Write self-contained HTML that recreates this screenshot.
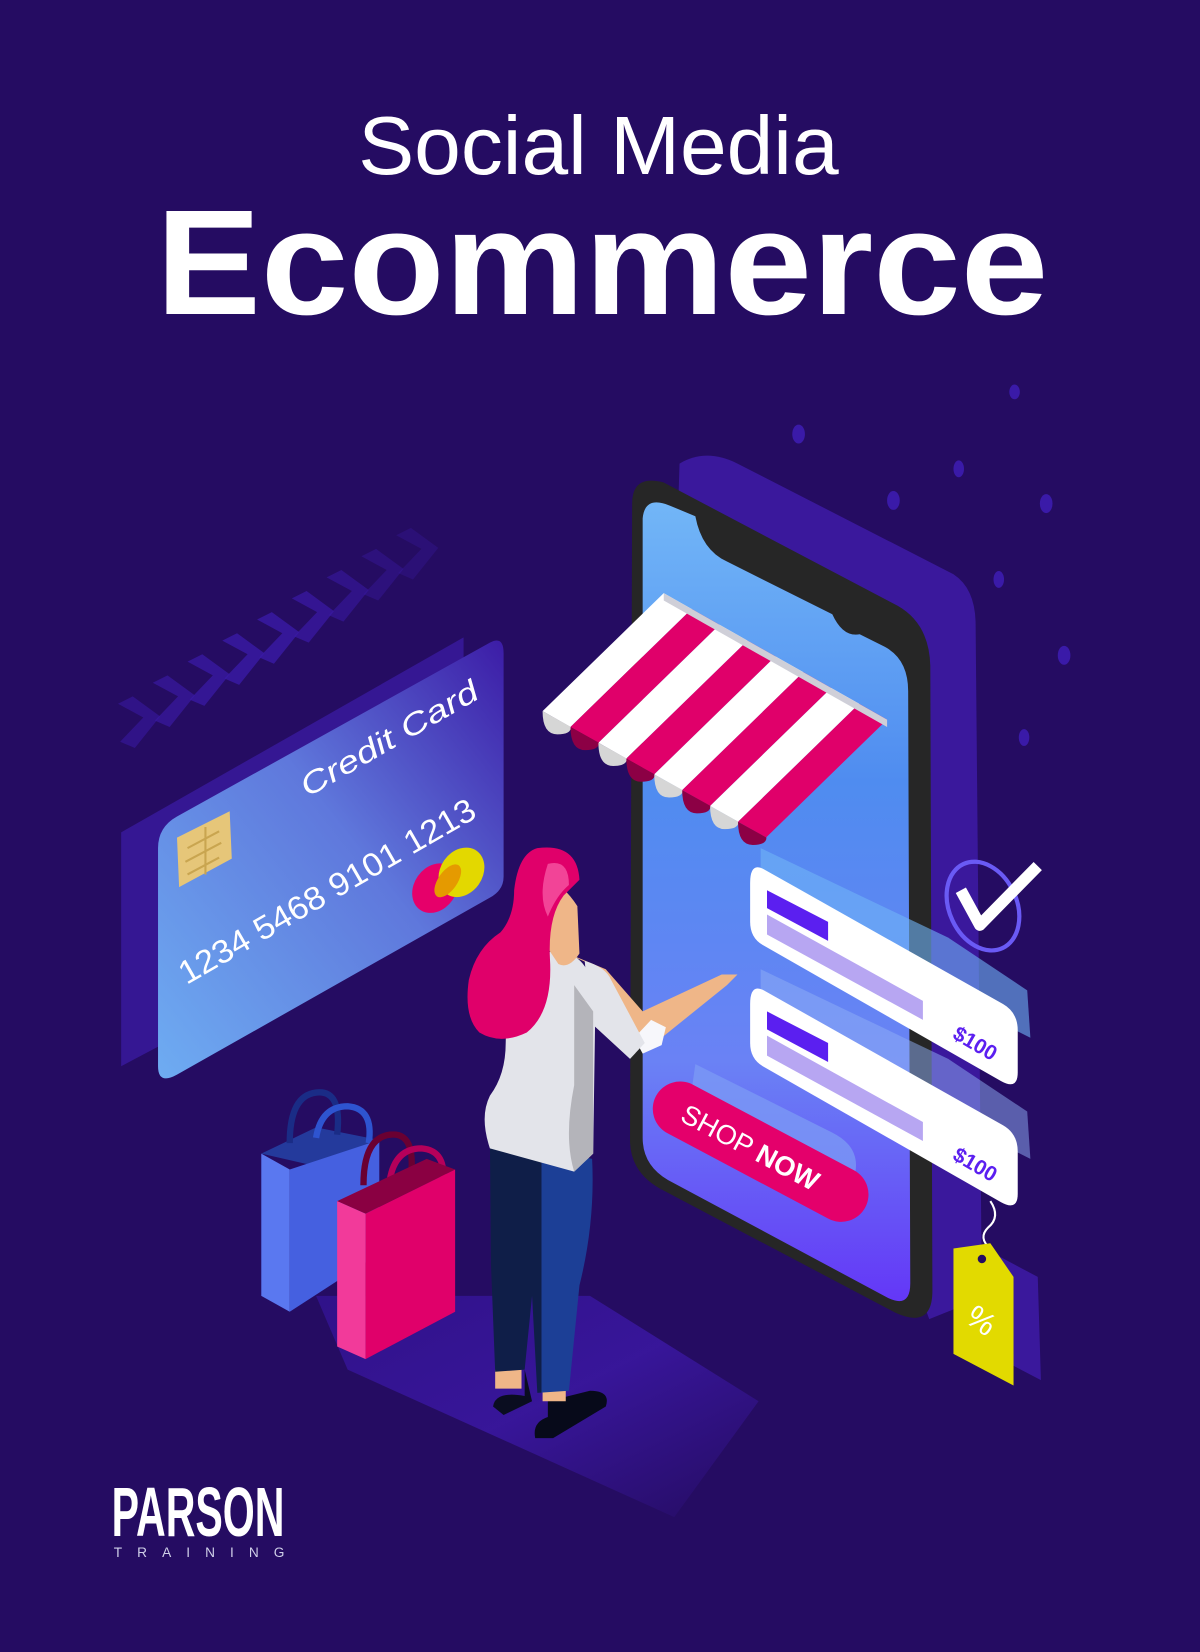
<!DOCTYPE html>
<html><head><meta charset="utf-8"><style>
html,body{margin:0;padding:0;background:#250c62;}
svg{display:block}
</style></head><body>
<svg width="1200" height="1652" viewBox="0 0 1139 1568" preserveAspectRatio="none" xmlns="http://www.w3.org/2000/svg">
<defs>
<linearGradient id="scr" x1="0" y1="0" x2="0" y2="1">
<stop offset="0" stop-color="#72b6f7"/><stop offset="0.35" stop-color="#4f8cf0"/><stop offset="0.7" stop-color="#6a82f5"/><stop offset="1" stop-color="#6437f7"/></linearGradient>
<linearGradient id="card" x1="0" y1="1" x2="1" y2="0">
<stop offset="0" stop-color="#6eacf2"/><stop offset="0.55" stop-color="#5f78dc"/><stop offset="1" stop-color="#3c1ca6"/></linearGradient>
<linearGradient id="floor" x1="0" y1="0" x2="1" y2="1">
<stop offset="0" stop-color="#3b17b0"/><stop offset="0.5" stop-color="#4a1fd0"/><stop offset="1" stop-color="#250c62"/></linearGradient>
<linearGradient id="pants" x1="0" y1="0" x2="1" y2="0"><stop offset="0.5" stop-color="#0f1e48"/><stop offset="0.5" stop-color="#1c3f96"/></linearGradient>
<path id="chev" d="M0,0 L14,-7 L40,12 L16,42 L2,36 L24,13 Z"/>
</defs>
<rect width="1139" height="1568" fill="#250c62"/>

<text x="340" y="165" font-family="Liberation Sans, sans-serif" font-size="78" fill="#fff" textLength="456" lengthAdjust="spacingAndGlyphs">Social Media</text>
<text x="148" y="298" font-family="Liberation Sans, sans-serif" font-weight="bold" font-size="142" fill="#fff" textLength="847" lengthAdjust="spacingAndGlyphs">Ecommerce</text>

<!-- chevrons -->
<g fill="#3a1aa6">
<use href="#chev" x="112" y="668" opacity="0.55"/>
<use href="#chev" x="145" y="648" opacity="0.65"/>
<use href="#chev" x="178" y="628" opacity="0.75"/>
<use href="#chev" x="211" y="608" opacity="0.8"/>
<use href="#chev" x="244" y="588" opacity="0.8"/>
<use href="#chev" x="277" y="568" opacity="0.7"/>
<use href="#chev" x="310" y="548" opacity="0.55"/>
<use href="#chev" x="343" y="528" opacity="0.4"/>
<use href="#chev" x="376" y="508" opacity="0.3"/>
</g>

<!-- floor glow -->
<path d="M300,1230 L560,1230 L720,1330 L640,1440 L330,1300 Z" fill="url(#floor)" opacity="0.5"/>

<!-- dots -->
<g fill="#3a1aa8">
<ellipse cx="758" cy="412" rx="6" ry="9"/><ellipse cx="848" cy="475" rx="6" ry="9"/><ellipse cx="910" cy="445" rx="5" ry="8"/>
<ellipse cx="993" cy="478" rx="6" ry="9"/><ellipse cx="948" cy="550" rx="5" ry="8"/><ellipse cx="1010" cy="622" rx="6" ry="9"/><ellipse cx="963" cy="372" rx="5" ry="7"/>
<ellipse cx="972" cy="700" rx="5" ry="8"/>
</g>

<!-- card back shadow -->
<path d="M115,790 L440,605 L440,840 L115,1012 Z" fill="#3a1aa0" opacity="0.8"/>
<path d="M150,805 Q150,785 168,775 L465,610 Q478,603 478,620 L478,832 Q478,845 465,852 L168,1020 Q150,1030 150,1012 Z" fill="url(#card)"/>
<path d="M168,795 L218,770 L220,815 L170,842 Z" fill="#e6c679"/>
<path d="M178,805 l30,-16 M176,818 l34,-18 M178,830 l30,-16 M195,785 l0,45" stroke="#c9a550" stroke-width="2"/>
<g transform="translate(292,757) rotate(-30)"><text font-family="Liberation Sans, sans-serif" font-style="italic" font-size="29" fill="#fff" textLength="190" lengthAdjust="spacingAndGlyphs">Credit Card</text></g>
<g transform="translate(177,935) rotate(-30)"><text font-family="Liberation Sans, sans-serif" font-size="31" fill="#fff" textLength="320" lengthAdjust="spacingAndGlyphs">1234 5468 9101 1213</text></g>
<ellipse cx="413" cy="843" rx="20" ry="25" transform="rotate(35 413 843)" fill="#e6006a"/>
<ellipse cx="438" cy="828" rx="20" ry="25" transform="rotate(35 438 828)" fill="#e3d800"/>
<ellipse cx="425" cy="836" rx="9" ry="18" transform="rotate(35 425 836)" fill="#e59a00"/>

<!-- phone shadow panel -->
<path d="M645,440 Q670,425 700,440 L905,545 Q925,558 926,590 L932,1232 L882,1252 L640,600 Z" fill="#3a189c"/>
<path d="M600,478 Q600,450 630,458 L852,575 Q882,592 883,632 L885,1225 Q885,1262 850,1246 L626,1128 Q598,1112 598,1082 Z" fill="#262626"/>
<path d="M610,492 Q612,470 636,480 L660,490 Q666,522 690,533 L790,583 Q800,605 816,602 L840,614 Q862,626 862,656 L864,1218 Q864,1242 843,1232 L634,1120 Q610,1106 610,1080 Z" fill="url(#scr)"/>

<path d="M660,1010 L790,1075 Q820,1090 810,1120 L655,1045 Z" fill="#7a98f5" opacity="0.8"/>
<g transform="rotate(28 722 1092)"><rect x="610" y="1067" width="225" height="52" rx="26" fill="#e4006b"/>
<text x="640" y="1103" font-family="Liberation Sans, sans-serif" font-size="26" fill="#fff">SHOP <tspan font-weight="bold">NOW</tspan></text></g>

<!-- awning -->
<g>
<path d="M630,563 L656.5,578 L541.5,690 L515,675 Z" fill="#fff"/>
<path d="M656.5,578 L683,593 L568,705 L541.5,690 Z" fill="#e0006a"/>
<path d="M683,593 L709.5,608 L594.5,720 L568,705 Z" fill="#fff"/>
<path d="M709.5,608 L736,623 L621,735 L594.5,720 Z" fill="#e0006a"/>
<path d="M736,623 L762.5,638 L647.5,750 L621,735 Z" fill="#fff"/>
<path d="M762.5,638 L789,653 L674,765 L647.5,750 Z" fill="#e0006a"/>
<path d="M789,653 L815.5,668 L700.5,780 L674,765 Z" fill="#fff"/>
<path d="M815.5,668 L842,683 L727,795 L700.5,780 Z" fill="#e0006a"/>
<path d="M630,563 L842,683 L842,690 L630,570 Z" fill="#cfcfd8"/>
<path d="M515,675 q0,22 14,22 q13,0 13,-7 Z" fill="#d6d6d6"/>
<path d="M541.5,690 q0,22 14,22 q13,0 13,-7 Z" fill="#8c0045"/>
<path d="M568,705 q0,22 14,22 q13,0 13,-7 Z" fill="#d6d6d6"/>
<path d="M594.5,720 q0,22 14,22 q13,0 13,-7 Z" fill="#8c0045"/>
<path d="M621,735 q0,22 14,22 q13,0 13,-7 Z" fill="#d6d6d6"/>
<path d="M647.5,750 q0,22 14,22 q13,0 13,-7 Z" fill="#8c0045"/>
<path d="M674,765 q0,22 14,22 q13,0 13,-7 Z" fill="#d6d6d6"/>
<path d="M700.5,780 q0,22 14,22 q13,0 13,-7 Z" fill="#8c0045"/>
</g>

<!-- product cards -->
<path d="M722,805 L900,890 L975,940 L978,985 L722,855 Z" fill="#6fb4f7" opacity="0.6"/>
<path d="M725,825 L952,953 Q966,961 966,978 L966,1018 Q966,1035 950,1026 L724,897 Q712,890 712,875 L712,838 Q712,818 725,825 Z" fill="#fff"/>
<path d="M728,845 L786,875 L786,893 L728,862 Z" fill="#5b1ff0"/>
<path d="M728,868 L876,950 L876,968 L728,887 Z" fill="#b7a6f2"/>
<g transform="translate(903,985) rotate(30)"><text font-family="Liberation Sans, sans-serif" font-weight="bold" font-size="20" fill="#5b1ff0">$100</text></g>
<path d="M722,920 L900,1005 L975,1055 L978,1100 L722,970 Z" fill="#8fb0f5" opacity="0.5"/>
<path d="M725,940 L952,1068 Q966,1076 966,1093 L966,1133 Q966,1150 950,1141 L724,1012 Q712,1005 712,990 L712,953 Q712,933 725,940 Z" fill="#fff"/>
<path d="M728,960 L786,990 L786,1008 L728,977 Z" fill="#5b1ff0"/>
<path d="M728,983 L876,1065 L876,1083 L728,1002 Z" fill="#b7a6f2"/>
<g transform="translate(903,1100) rotate(30)"><text font-family="Liberation Sans, sans-serif" font-weight="bold" font-size="20" fill="#5b1ff0">$100</text></g>

<ellipse cx="933" cy="860" rx="32" ry="44" transform="rotate(-25 933 860)" fill="none" stroke="#6a5af5" stroke-width="4"/>
<path d="M912,845 L930,878 L985,822" fill="none" stroke="#fff" stroke-width="11" stroke-linejoin="round"/>

<path d="M940,1140 q10,15 -2,25 q-10,10 2,20" fill="none" stroke="#fff" stroke-width="2"/>
<path d="M940,1188 L985,1212 L988,1310 L950,1290 Z" fill="#3a189c"/>
<path d="M905,1185 L940,1180 L962,1212 L962,1315 L905,1285 Z" fill="#e2da00"/>
<circle cx="932" cy="1195" r="4" fill="#250c62"/>
<text x="917" y="1263" font-family="Liberation Sans, sans-serif" font-size="30" fill="#fff" transform="rotate(35 930 1255)">%</text>

<!-- bags -->
<path d="M248,1095 L300,1070 L360,1082 L305,1108 Z" fill="#243a9c"/>
<path d="M275,1085 q0,-45 25,-48 q25,-3 20,40" fill="none" stroke="#1a2c86" stroke-width="6"/>
<path d="M300,1080 q5,-30 30,-30 q25,2 20,35" fill="none" stroke="#2e54d0" stroke-width="6"/>
<path d="M248,1095 L275,1110 L275,1245 L248,1230 Z" fill="#5a78f0"/>
<path d="M275,1110 L360,1082 L360,1190 L275,1245 Z" fill="#4560e0"/>
<path d="M345,1125 q0,-45 25,-48 q25,-3 20,40" fill="none" stroke="#6a0032" stroke-width="6"/>
<path d="M370,1120 q5,-30 30,-30 q25,2 20,35" fill="none" stroke="#b5005a" stroke-width="6"/>
<path d="M320,1140 L405,1100 L432,1110 L347,1152 Z" fill="#8a0042"/>
<path d="M320,1140 L347,1152 L347,1290 L320,1278 Z" fill="#f23a9a"/>
<path d="M347,1152 L432,1110 L432,1245 L347,1290 Z" fill="#e0006a"/>

<!-- woman -->
<path d="M498,1300 L498,1325 Q470,1320 468,1335 L478,1343 L505,1330 Z" fill="#0a0d20"/>
<path d="M520,1330 L520,1345 Q505,1350 508,1365 L525,1365 L575,1335 Q580,1320 560,1320 Z" fill="#070a1a"/>
<path d="M470,1300 h25 v18 h-25 z M515,1318 h22 v12 h-22 z" fill="#efb688"/>
<path d="M465,1080 L562,1100 Q565,1160 550,1220 L540,1320 L510,1322 L505,1230 L498,1300 L470,1302 L466,1200 Z" fill="url(#pants)"/>
<path d="M527,900 L560,915 L600,985 Q612,1000 628,985 L690,935 L700,925 L685,925 L610,960 L575,920 Z" fill="#efb688"/>
<path d="M610,1000 L628,992 L632,975 L618,968 L602,985 Z" fill="#f7f7fb"/>
<path d="M555,912 Q575,918 580,930 L612,990 L598,1005 L560,970 Z" fill="#e3e4ea"/>
<path d="M482,900 L540,905 Q565,915 565,960 L563,1095 L545,1112 L465,1090 Q455,1060 465,1040 Q480,1020 480,990 Z" fill="#e3e4ea"/>
<path d="M545,935 L563,960 L563,1095 L545,1112 Q535,1080 545,1030 Z" fill="#b4b4ba"/>
<path d="M520,835 Q535,840 548,860 L550,905 Q540,920 530,915 L520,900 Z" fill="#efb688"/>
<path d="M510,805 Q548,800 550,835 L535,850 Q520,870 522,910 Q525,960 500,980 Q475,992 455,980 Q440,965 445,930 Q452,900 475,885 Q488,870 488,845 Q492,810 510,805 Z" fill="#e0006a"/>
<path d="M520,820 Q540,815 540,840 Q528,850 520,870 Q510,850 520,820 Z" fill="#f24497"/>

<!-- logo -->
<text x="106" y="1458" font-family="Liberation Sans, sans-serif" font-weight="bold" font-size="66" fill="#fff" textLength="164" lengthAdjust="spacingAndGlyphs">PARSON</text>
<text x="108" y="1478" font-family="Liberation Sans, sans-serif" font-size="13" fill="#cfcfe8" textLength="162" lengthAdjust="spacing">TRAINING</text>
</svg>
</body></html>
